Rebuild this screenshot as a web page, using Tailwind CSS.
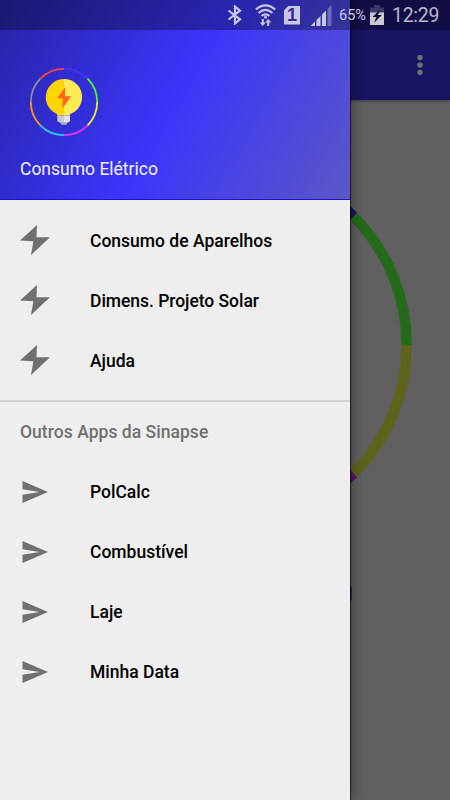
<!DOCTYPE html>
<html lang="pt-BR">
  <head>
    <meta charset="UTF-8" />
    <meta name="viewport" content="width=device-width, initial-scale=1.0" />
    <title>Consumo Elétrico</title>
    <script src="https://cdn.jsdelivr.net/npm/@tailwindcss/browser@4"></script>
  </head>
  <body class="relative h-[800px] w-[450px] overflow-hidden bg-[#606060] font-['Roboto',sans-serif]">
    <!-- App behind the drawer -->
    <header class="flex h-[100px] items-end justify-end bg-[#191463] pr-[26px] pb-[25px] shadow-[0_1px_3px_rgba(0,0,0,0.4)]">
      <svg class="h-5 w-2" viewBox="0 0 8 20" fill="#717171">
        <circle cx="4" cy="2.6" r="2.7" />
        <circle cx="4" cy="10" r="2.7" />
        <circle cx="4" cy="17.4" r="2.7" />
      </svg>
    </header>
    <main>
      <svg class="h-[700px] w-[450px]" viewBox="0 100 450 700" fill="none" stroke-width="10.5">
        <path d="M225 163.3A181.7 181.7 0 0 1 353.5 216.5" stroke="#191463" />
        <path d="M353.5 216.5A181.7 181.7 0 0 1 406.7 345" stroke="#256b1b" />
        <path d="M406.7 345A181.7 181.7 0 0 1 353.5 473.5" stroke="#5e651a" />
        <path d="M353.5 473.5A181.7 181.7 0 0 1 225 526.7" stroke="#5c1468" />
        <rect x="300" y="586" width="51.5" height="15" rx="2" fill="#05055c" />
      </svg>
    </main>

    <!-- Navigation drawer -->
    <aside class="absolute top-0 left-0 flex h-[800px] w-[350px] flex-col bg-[#eeeeee] shadow-[1px_0_1px_rgba(0,0,0,0.55),2px_0_12px_rgba(0,0,0,0.35)]">
      <div class="flex h-[200px] shrink-0 flex-col border-b border-[#1d12cf] bg-[linear-gradient(119.7deg,#2824a4_0%,#3b35fb_50%,#5b57c5_100%)] pt-[67px] pl-5">
        <svg class="ml-[9px] h-[70px] w-[70px]" viewBox="29 67 70 70">
          <g fill="none" stroke-width="1.8">
            <path d="M64 68.8A33.2 33.2 0 0 1 87.5 78.5" stroke="#3d36fa" />
            <path d="M87.5 78.5A33.2 33.2 0 0 1 97.2 102" stroke="#4cf52c" />
            <path d="M97.2 102A33.2 33.2 0 0 1 87.5 125.5" stroke="#e4f02d" />
            <path d="M87.5 125.5A33.2 33.2 0 0 1 64 135.2" stroke="#d936f0" />
            <path d="M64 135.2A33.2 33.2 0 0 1 40.5 125.5" stroke="#2fc2f5" />
            <path d="M40.5 125.5A33.2 33.2 0 0 1 30.8 102" stroke="#fb981f" />
            <path d="M30.8 102A33.2 33.2 0 0 1 40.5 78.5" stroke="#8d8a9f" />
            <path d="M40.5 78.5A33.2 33.2 0 0 1 64 68.8" stroke="#fb4444" />
          </g>
          <path d="M64 79a18.2 18.2 0 0 0-7 35v1.500h7z" fill="#ffd500" />
          <path d="M64 79a18 18 0 0 1 6 35v1.500h-6z" fill="#ffeb55" />
          <path d="M57.300 115.500H64V125h-2l-1.800-2.300-2.900-1.500z" fill="#c6c9d3" />
          <path d="M64 115.500h6v5.700l-2.700 1.500-1.500 2.300H64z" fill="#e2e4e8" />
          <path d="M60.200 122.500h7.400L65.700 125h-3.600z" fill="#a3a5af" />
          <path d="M65 87.200 57.300 98.200h5.500L62.600 108.200 71 96.200h-6z" fill="#ff641a" />
        </svg>
        <h1 class="mt-[21px] text-[17.5px] leading-[22px] text-[#f2f1ff]">Consumo Elétrico</h1>
      </div>

      <nav class="text-[17.5px] font-medium text-black">
        <ul class="h-[200px] pt-[11px]">
          <li class="flex h-[60px] items-center pl-5">
            <svg class="mr-10 mb-[2px] h-[30px] w-[30px]" viewBox="0 0 30 30" fill="#707070"><path d="M17 0 0 15.500 13.400 16.200 11 30 30 12.200 16.500 12.200z" /></svg>
            Consumo de Aparelhos
          </li>
          <li class="flex h-[60px] items-center pl-5 tracking-[-0.04px]">
            <svg class="mr-10 mb-[2px] h-[30px] w-[30px]" viewBox="0 0 30 30" fill="#707070"><path d="M17 0 0 15.500 13.400 16.200 11 30 30 12.200 16.500 12.200z" /></svg>
            <span class="mt-px">Dimens. Projeto Solar</span>
          </li>
          <li class="flex h-[60px] items-center pl-5">
            <svg class="mr-10 mb-[2px] h-[30px] w-[30px]" viewBox="0 0 30 30" fill="#707070"><path d="M17 0 0 15.500 13.400 16.200 11 30 30 12.200 16.500 12.200z" /></svg>
            Ajuda
          </li>
        </ul>
        <div class="h-[2px] bg-[#d0d0d0]"></div>
        <h2 class="flex h-[60px] items-center pt-px pl-5 tracking-[0.04px] text-[#707070]">Outros Apps da Sinapse</h2>
        <ul>
          <li class="flex h-[60px] items-center pl-[22px]">
            <svg class="mr-[42px] mb-px h-[22px] w-[26px]" viewBox="0 0 26 22" fill="#707070"><path d="M.5 0 26 11 .5 22V13.800L17.500 11 .5 8.200z" /></svg>
            PolCalc
          </li>
          <li class="flex h-[60px] items-center pl-[22px]">
            <svg class="mr-[42px] mb-px h-[22px] w-[26px]" viewBox="0 0 26 22" fill="#707070"><path d="M.5 0 26 11 .5 22V13.800L17.500 11 .5 8.200z" /></svg>
            Combustível
          </li>
          <li class="flex h-[60px] items-center pl-[22px]">
            <svg class="mr-[42px] mb-px h-[22px] w-[26px]" viewBox="0 0 26 22" fill="#707070"><path d="M.5 0 26 11 .5 22V13.800L17.500 11 .5 8.200z" /></svg>
            Laje
          </li>
          <li class="flex h-[60px] items-center pl-[22px]">
            <svg class="mr-[42px] mb-px h-[22px] w-[26px]" viewBox="0 0 26 22" fill="#707070"><path d="M.5 0 26 11 .5 22V13.800L17.500 11 .5 8.200z" /></svg>
            Minha Data
          </li>
        </ul>
      </nav>
    </aside>

    <!-- Status bar -->
    <div class="absolute top-0 left-0 flex h-[30px] w-[450px] items-center bg-black/30 pl-[227px] text-[#c9c7e4]">
      <svg class="h-5 w-[15px]" viewBox="0 0 15 20" fill="none" stroke="currentColor" stroke-width="2.200"><path d="M1.500 5.500 13 14.300 8 18.500V1.500L13 5.700 1.500 14.500" /></svg>
      <svg class="ml-[13px] h-[23px] w-[21px]" viewBox="0 0 21 23" fill="none" stroke="currentColor" stroke-width="2">
        <path d="M.8 5.500Q10.500-2.800 20.200 5.500M3.500 9Q10.500 2.800 17.500 9M6.500 12Q10.500 8.700 14.500 12" />
        <circle cx="10.500" cy="13.300" r="1.500" fill="currentColor" stroke="none" />
        <path d="M7.800 15v4.500M13.200 22v-4.500" stroke-width="2" />
        <path d="M4.800 18.500h6l-3 3.500zM10.200 18.500h6l-3-3.500z" fill="currentColor" stroke="none" />
      </svg>
      <div class="ml-2 flex h-[19px] w-4 items-center justify-center rounded-[1px] bg-[#c9c7e4] font-['Liberation_Sans',sans-serif] text-[18px] leading-none font-bold text-[#312d9d] [clip-path:polygon(30%_0,100%_0,100%_100%,0_100%,0_25%)]">1</div>
      <svg class="ml-[11px] h-[21px] w-[21px]" viewBox="0 0 21 21" fill="currentColor">
        <path d="M16.500 4 20.500 0v21h-4z" fill-opacity=".4" />
        <path d="M11 9.500 15 5.500V21h-4zM5.500 15 9.500 11v10h-4zM0 20.500l4-4V21H0z" />
      </svg>
      <span class="mt-px ml-[7px] w-7 text-[14.500px]">65%</span>
      <svg class="ml-[3px] h-5 w-[14px]" viewBox="0 0 14 20">
        <path d="M4 0h6v2.500h4V9H0V2.500h4z" fill="#3b3a66" />
        <path d="M0 7.500h14V20H0z" fill="#c9c9d4" />
        <path d="M10.500 4 2.500 12h3.800L4 18l7.800-8H8z" fill="#100d34" />
      </svg>
      <span class="mt-px ml-[8px] text-[19.500px] tracking-[-0.3px] text-[#b8b7c8]">12:29</span>
    </div>
  </body>
</html>
